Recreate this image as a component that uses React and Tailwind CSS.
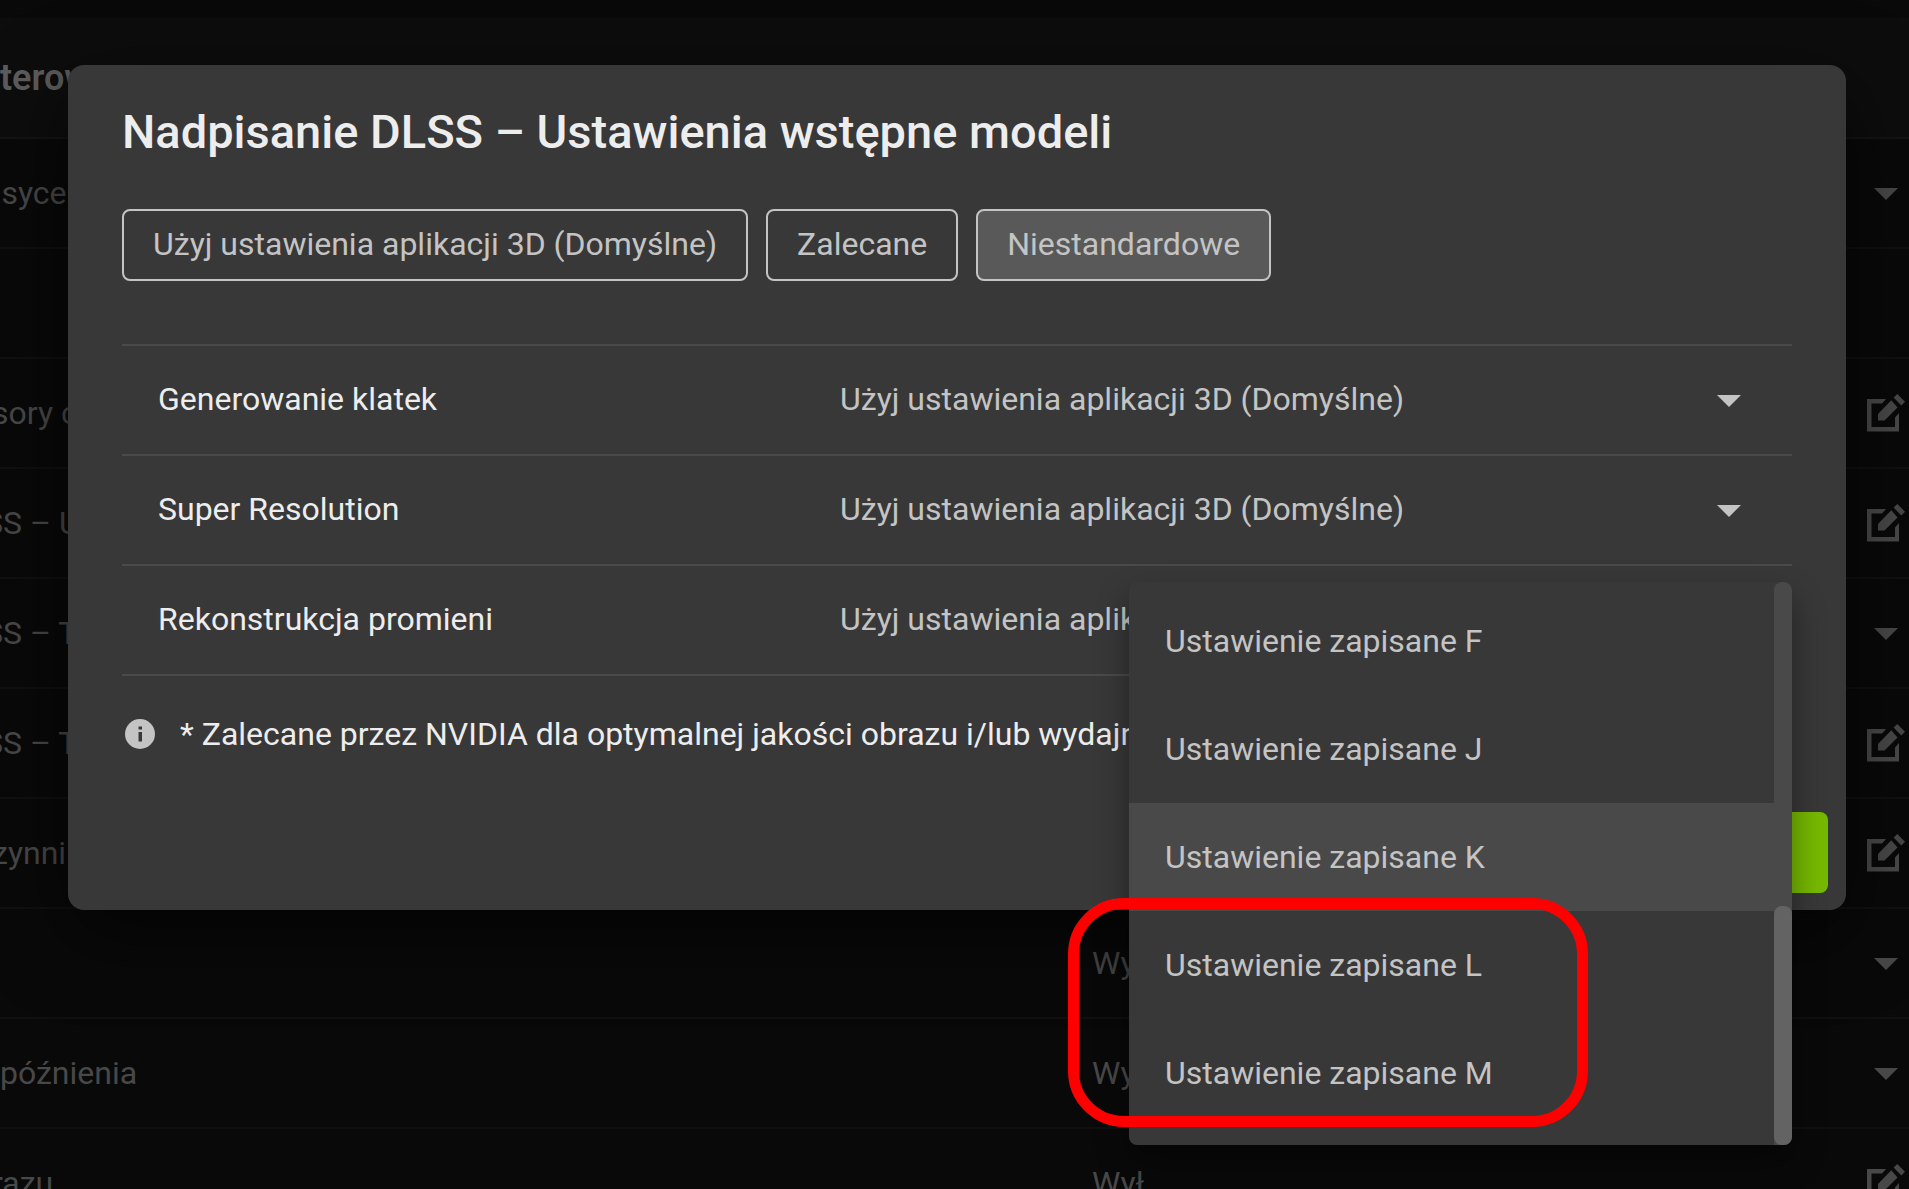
import React, { useState } from 'react';

const presets = ['F', 'J', 'K', 'L', 'M'];

const settings = [
  { id: 'frame-generation', label: 'Generowanie klatek' },
  { id: 'super-resolution', label: 'Super Resolution' },
  { id: 'ray-reconstruction', label: 'Rekonstrukcja promieni' },
];

const modes = ['Użyj ustawienia aplikacji 3D (Domyślne)', 'Zalecane', 'Niestandardowe'];

// rows of the settings page, scrolled sideways under the dialog
const pageRows = [
  { label: 'asyce', shift: '-ml-4', action: 'menu' },
  { label: '' },
  { label: 'sory c', shift: '-ml-2', action: 'edit' },
  { label: 'SS – U', shift: '-ml-4', action: 'edit' },
  { label: 'SS – T', shift: '-ml-4', action: 'menu' },
  { label: 'SS – T', shift: '-ml-4', action: 'edit' },
  { label: 'zynni', shift: '-ml-2', action: 'edit' },
  { label: '', value: 'Wył.', action: 'menu' },
  { label: 'późnienia', value: 'Wył.', action: 'menu' },
  { label: 'razu', shift: '-ml-2', value: 'Wył.', action: 'edit' },
];

const ArrowIcon = ({ className }) => (
  <svg className={className} width="24" height="14" viewBox="0 0 24 14" fill="currentColor">
    <path d="M0 2h24L12 14z" />
  </svg>
);

const EditIcon = () => (
  <svg width="39" height="39" viewBox="0 0 39 39" fill="currentColor">
    <path d="M0 5h19l-4 4.500H4.500V33H28V23.500l4-4.500V37.500H0z" />
    <path d="M11 20 24.300 6.200l6.200 7.300L17.500 26.500H11z" />
    <path d="M26.600 3.600 30.300 0 38 7.700l-3.700 3.700z" />
  </svg>
);

const InfoIcon = () => (
  <svg width="30" height="30" viewBox="0 0 30 30" className="text-[#c4c4c4]">
    <circle cx="15" cy="15" r="15" fill="currentColor" />
    <path d="M13.500 7.500h3.500v3h-3.500zM13.500 13h3.500v9.500h-3.500z" fill="#383838" />
  </svg>
);

const SettingsPage = () => (
  <div className="h-full overflow-hidden bg-[#090909] pt-[18px]">
    <div className="flex h-[121px] items-center border-b-2 border-[#141414] bg-[#0d0d0d]">
      <h2 className="text-4xl font-semibold text-[#5c5c5c]">terow</h2>
    </div>
    {pageRows.map((row, i) => (
      <div key={i} className="flex h-[110px] items-center border-b-2 border-[#101010] text-[32px] text-[#484848]">
        <div className="w-[1092px] shrink-0">
          <div className={row.shift}>{row.label}</div>
        </div>
        <div className="flex-1">{row.value}</div>
        {row.action && (
          <button
            aria-label={row.action === 'edit' ? 'Edytuj' : 'Rozwiń'}
            className="flex w-11 shrink-0 justify-center pr-0.5"
          >
            {row.action === 'edit' ? <EditIcon /> : <ArrowIcon />}
          </button>
        )}
      </div>
    ))}
  </div>
);

const PresetMenu = ({ selected, onSelect }) => (
  <div className="absolute right-0 top-4 z-10 w-[663px]">
    <div className="flex overflow-hidden rounded-lg bg-[#383838] shadow-[0_16px_32px_rgba(0,0,0,0.4)]">
      <div role="listbox" aria-label="Ustawienia zapisane" className="flex-1 pb-[18px] pt-[5px]">
        {presets.map((preset) => (
          <button
            key={preset}
            role="option"
            aria-selected={preset === selected}
            onClick={() => onSelect(preset)}
            className={`block h-[108px] w-full pl-9 text-left text-[32px] text-[#c4c4c4] ${
              preset === selected ? 'bg-[#494949]' : ''
            }`}
          >
            Ustawienie zapisane {preset}
          </button>
        ))}
      </div>
      <div className="flex w-[18px] items-end rounded-t-lg bg-[#494949]">
        <div className="h-[239px] w-full rounded-lg bg-[#636363]" />
      </div>
    </div>
    {/* highlight around the new presets */}
    <div className="pointer-events-none absolute -left-[61px] top-[316px] h-[229px] w-[520px] rounded-[56px] border-[11px] border-[#ff0000]" />
  </div>
);

const App = () => {
  const [mode, setMode] = useState(modes[2]);
  const [preset, setPreset] = useState('K');

  return (
    <div className="relative h-screen overflow-hidden bg-[#090909] font-['Roboto','Liberation_Sans',sans-serif]">
      <SettingsPage />
      <div className="absolute inset-0 pl-[68px] pr-[63px] pt-[65px]">
        <div
          role="dialog"
          aria-labelledby="dialog-title"
          className="rounded-2xl bg-[#383838] pb-[17px] pt-[39px] shadow-[0_24px_80px_rgba(0,0,0,0.6)]"
        >
          <div className="px-[54px]">
            <h1 id="dialog-title" className="text-[47px] font-medium leading-[56px] text-[#ededed]">
              Nadpisanie DLSS – Ustawienia wstępne modeli
            </h1>
            <div className="mt-[49px] flex gap-[18px]">
              {modes.map((name) => (
                <button
                  key={name}
                  onClick={() => setMode(name)}
                  className={`h-[72px] rounded-lg border-2 border-[#c4c4c4] px-[29px] pb-0.5 text-[32px] text-[#c4c4c4] ${
                    name === mode ? 'bg-[#595959]' : ''
                  }`}
                >
                  {name}
                </button>
              ))}
            </div>
            <div className="mt-[63px] border-t-2 border-[#4a4a4a]">
              {settings.map((item) => (
                <div key={item.id} className="relative flex h-[110px] items-center border-b-2 border-[#4a4a4a] pl-9 text-[32px]">
                  <label htmlFor={item.id} className="w-[682px] shrink-0 pb-0.5 text-[#ededed]">
                    {item.label}
                  </label>
                  <div className="relative flex-1">
                    <select id={item.id} className="w-full appearance-none bg-transparent pb-0.5 text-[#c4c4c4]">
                      <option>{modes[0]}</option>
                    </select>
                    <ArrowIcon className="pointer-events-none absolute right-[51px] top-1/2 -translate-y-1/2 text-[#c4c4c4]" />
                  </div>
                  {item.id === 'ray-reconstruction' && <PresetMenu selected={preset} onSelect={setPreset} />}
                </div>
              ))}
            </div>
            <div className="mt-10 flex h-9 items-center gap-[25px] whitespace-nowrap pl-[3px] text-[32px] text-[#ededed]">
              <InfoIcon />
              <p>* Zalecane przez NVIDIA dla optymalnej jakości obrazu i/lub wydajności</p>
            </div>
          </div>
          <div className="mt-[60px] flex justify-end pr-[18px]">
            <button aria-label="Zastosuj" className="h-[81px] w-[200px] rounded-lg bg-[#76b900]" />
          </div>
        </div>
      </div>
    </div>
  );
};

export default App;
